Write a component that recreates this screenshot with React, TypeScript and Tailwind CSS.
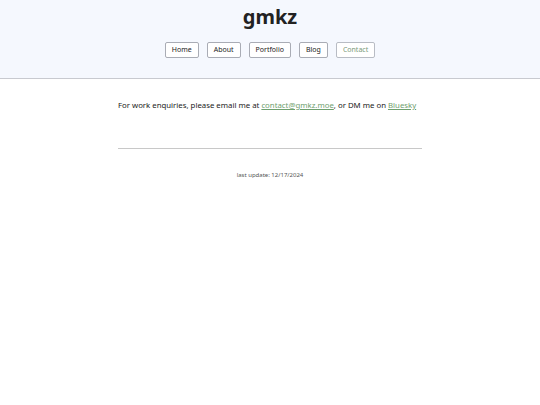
import React from "react";

const NAV = ["Home", "About", "Portfolio", "Blog", "Contact"];

export default function App() {
  return (
    <div className="min-h-screen bg-white text-[#222]" style={{ fontFamily: '"Noto Sans", sans-serif' }}>
      {/* Header */}
      <header className="h-[79px] bg-[#f5f8fe] border-b border-[#c8cad0] flex flex-col items-center pt-[3px]">
        <h1 className="text-[20px] leading-[28px] font-bold text-[#222]">gmkz</h1>
        <nav className="mt-[11px] flex gap-[8px]">
          {NAV.map((item) => (
            <a
              key={item}
              href="#"
              className={
                "h-[16px] px-[6px] flex items-center rounded-[2px] border bg-white text-[7px] " +
                (item === "Contact" ? "text-[#7a9a7a] border-[#b8bcc4]" : "text-[#222] border-[#a9acb5]")
              }
            >
              {item}
            </a>
          ))}
        </nav>
      </header>

      <main className="w-[304px] mx-auto">
        <p className="mt-[20px] text-[7.8px] leading-[12px] text-[#222] whitespace-nowrap">
          For work enquiries, please email me at{" "}
          <a href="#" className="text-[#6fa06f] underline">contact@gmkz.moe</a>, or DM me on{" "}
          <a href="#" className="text-[#6fa06f] underline">Bluesky</a>
        </p>
        <hr className="mt-[37px] border-t border-[#c8c8c8]" />
        <p className="mt-[22px] text-[6px] text-[#555] text-center">last update: 12/17/2024</p>
      </main>
    </div>
  );
}
